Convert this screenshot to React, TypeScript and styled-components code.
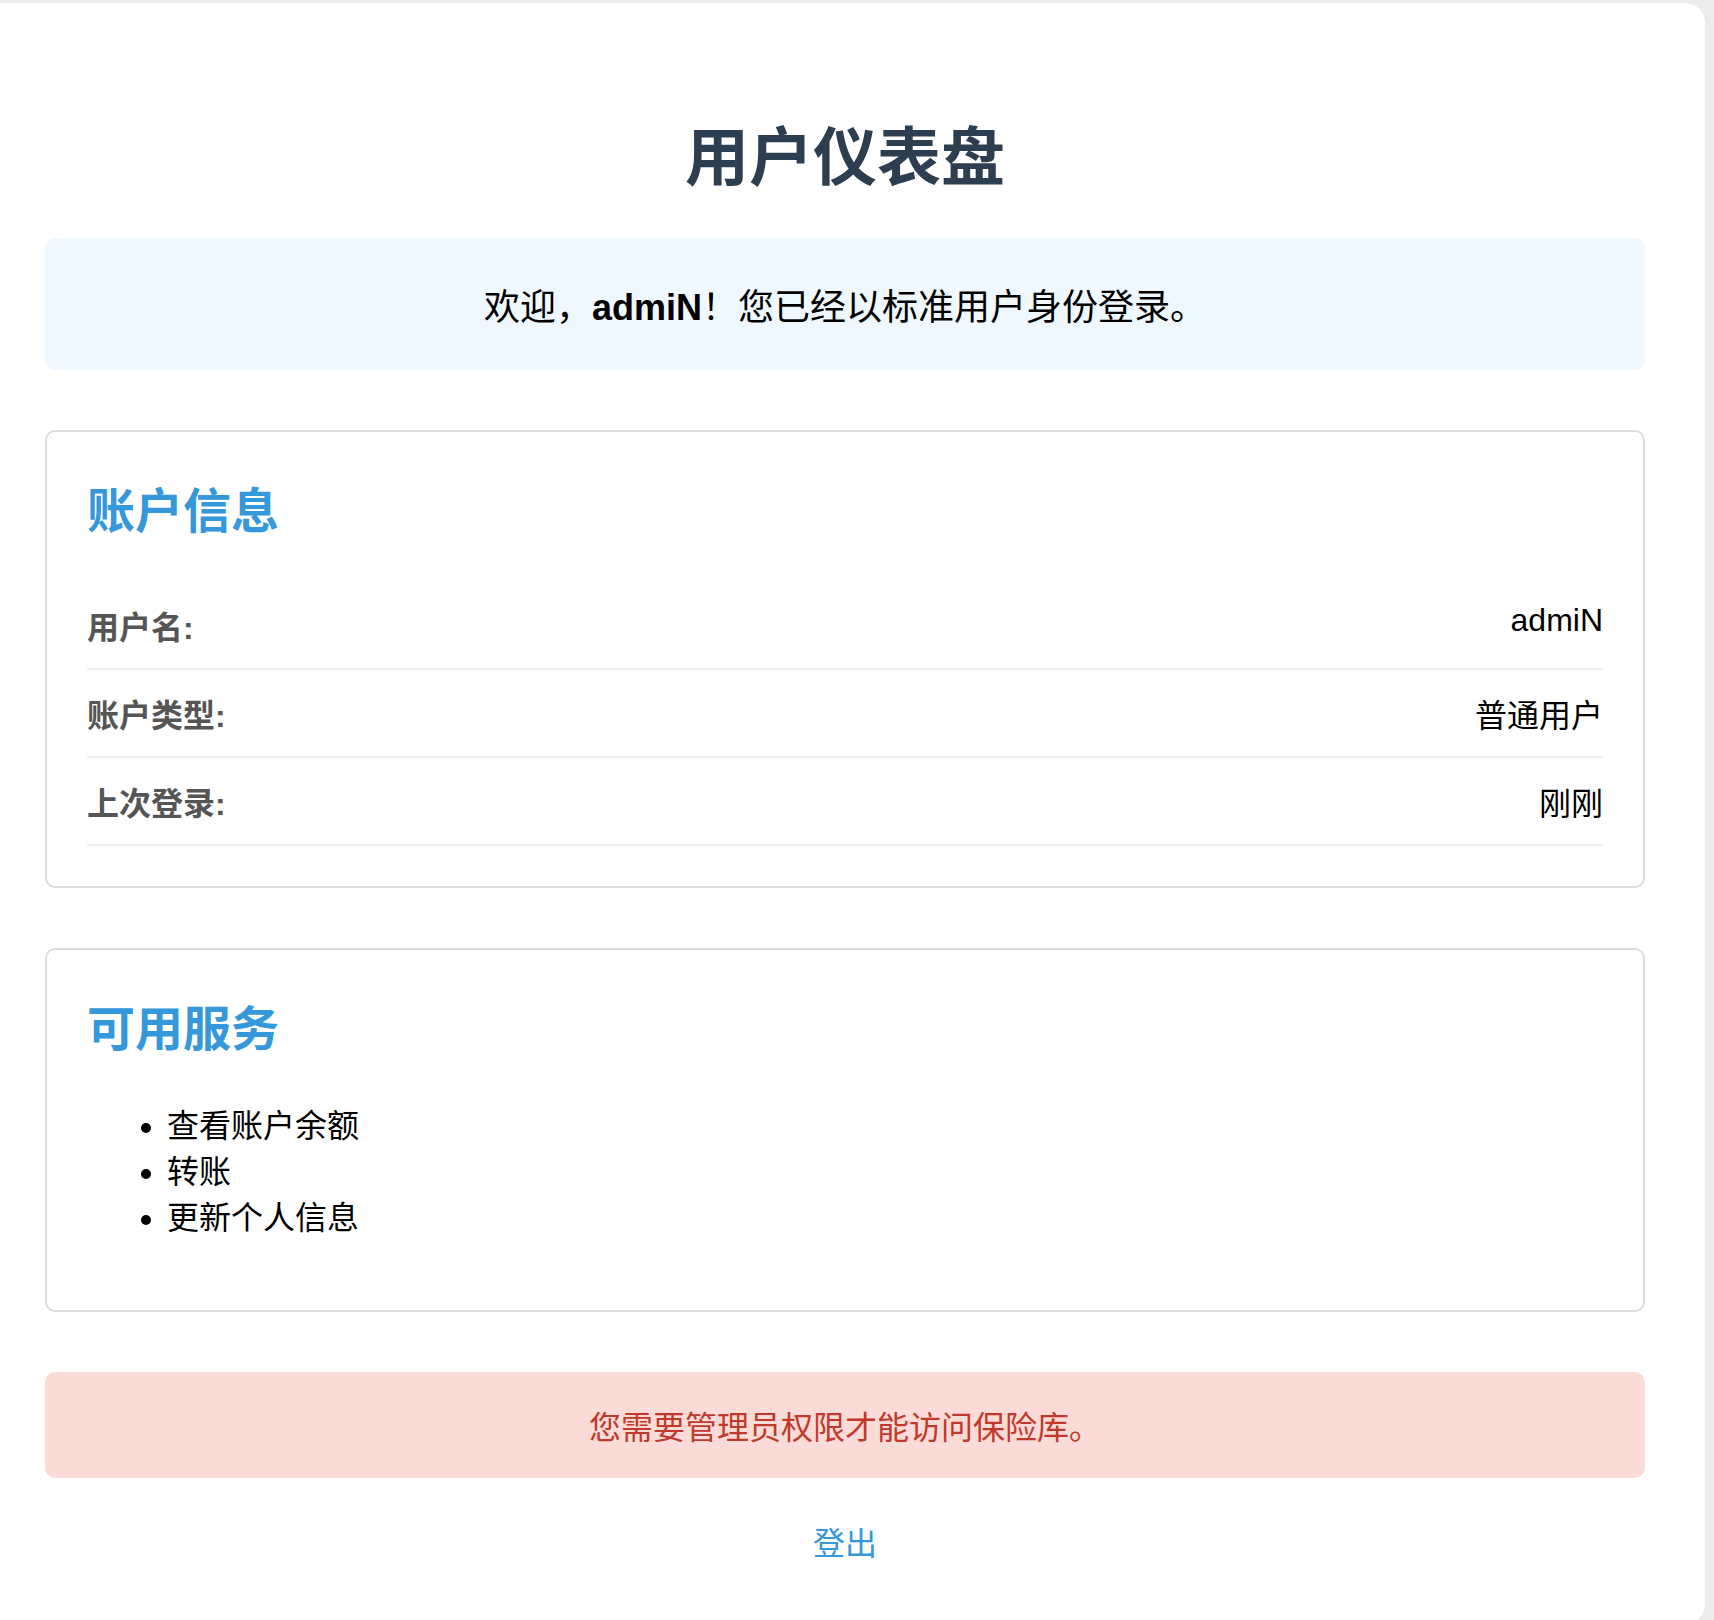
import React from 'react';
import styled, { createGlobalStyle } from 'styled-components';

const GlobalStyle = createGlobalStyle`
  html, body {
    margin: 0;
    padding: 0;
    background: #ececec;
    overflow-x: hidden;
  }
  body {
    font-family: "Liberation Sans", Arial, "Noto Sans CJK SC", sans-serif;
    font-size: 32px;
    color: #000;
  }
`;

const Page = styled.div`
  width: 1600px;
  margin: 3px 0 0 -15px;
  padding: 60px;
  background: #fff;
  border-radius: 20px;
`;

const Title = styled.h1`
  margin: 43px 0 40px;
  font-size: 64px;
  font-weight: bold;
  color: #2c3e50;
  text-align: center;
`;

const Welcome = styled.div`
  margin-bottom: 60px;
  padding: 40px;
  background: #f0f8ff;
  border-radius: 10px;
  text-align: center;
  font-size: 36px;
`;

const Card = styled.section`
  margin-bottom: 60px;
  padding: 40px;
  border: 2px solid #ddd;
  border-radius: 10px;
`;

const CardTitle = styled.h2`
  margin: 0 0 40px;
  font-size: 48px;
  font-weight: bold;
  color: #3498db;
`;

const InfoRow = styled.div`
  display: flex;
  justify-content: space-between;
  padding: 20px 0;
  border-bottom: 2px solid #eee;
`;

const Label = styled.span`
  font-weight: bold;
  color: #555;
`;

const Value = styled.span``;

const Services = styled.ul`
  margin: 40px 0 32px;
  padding-left: 80px;
`;

const Alert = styled.div`
  padding: 30px;
  background: #fadbd8;
  color: #c0392b;
  border-radius: 10px;
  text-align: center;
`;

const Footer = styled.div`
  margin-top: 40px;
  text-align: center;
`;

const Logout = styled.a`
  color: #3498db;
  text-decoration: none;
`;

const info = [
  { label: '用户名:', value: 'admiN' },
  { label: '账户类型:', value: '普通用户' },
  { label: '上次登录:', value: '刚刚' },
];

const services = ['查看账户余额', '转账', '更新个人信息'];

export default function App() {
  return (
    <>
      <GlobalStyle />
      <Page>
        <Title>用户仪表盘</Title>
        <Welcome>
          欢迎，<strong>admiN</strong>！您已经以标准用户身份登录。
        </Welcome>

        <Card>
          <CardTitle>账户信息</CardTitle>
          {info.map((row) => (
            <InfoRow key={row.label}>
              <Label>{row.label}</Label>
              <Value>{row.value}</Value>
            </InfoRow>
          ))}
        </Card>

        <Card>
          <CardTitle>可用服务</CardTitle>
          <Services>
            {services.map((s) => (
              <li key={s}>{s}</li>
            ))}
          </Services>
        </Card>

        <Alert>您需要管理员权限才能访问保险库。</Alert>

        <Footer>
          <Logout href="#">登出</Logout>
        </Footer>
      </Page>
    </>
  );
}
